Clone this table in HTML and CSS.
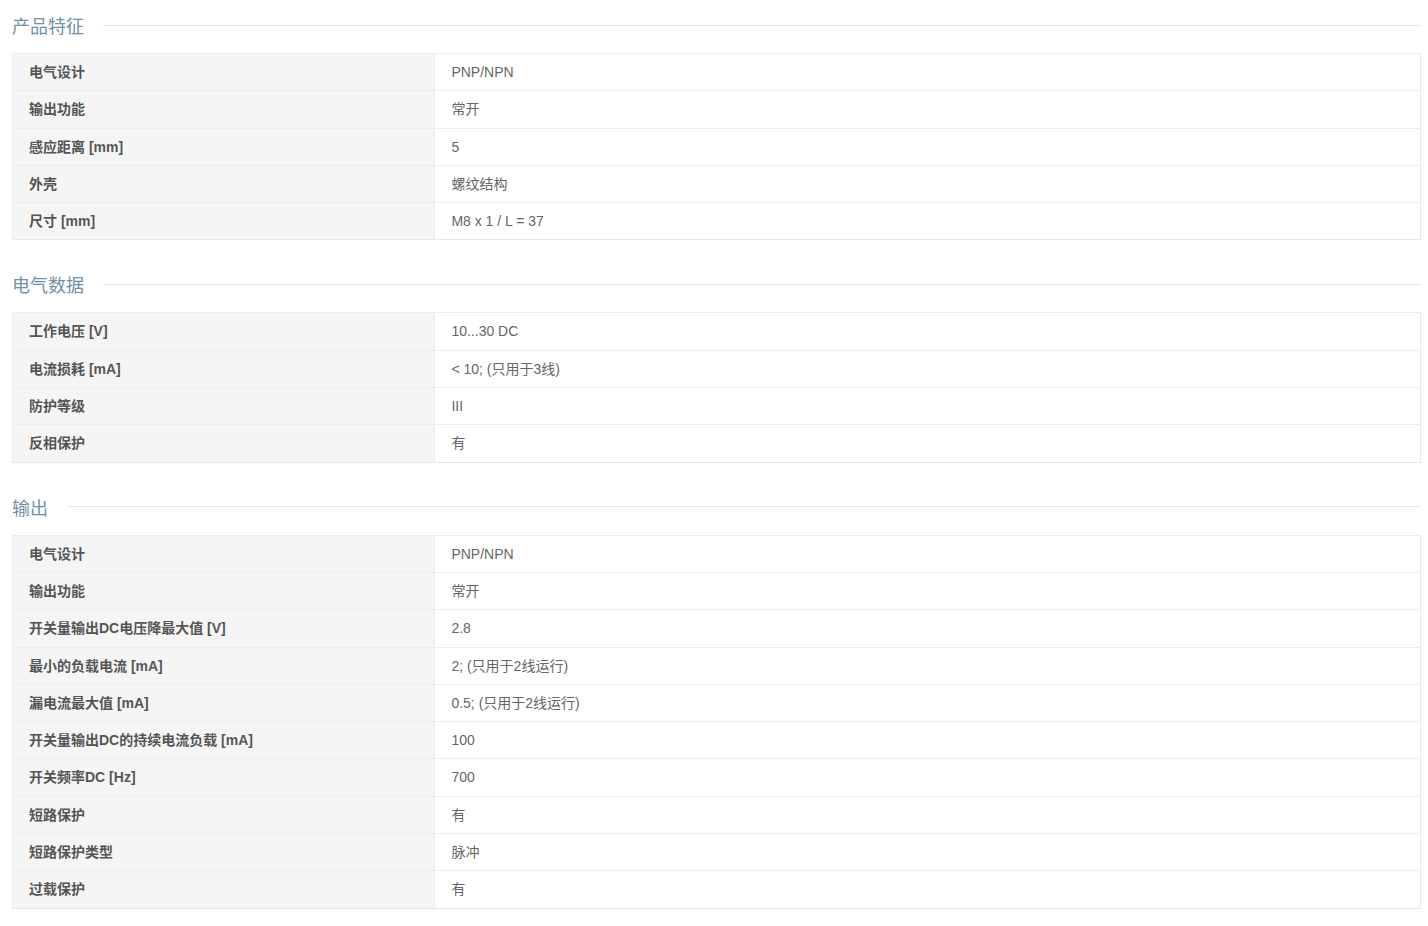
FILE: index.html
```html
<!DOCTYPE html>
<html>

<head>
	<meta charset="UTF-8">
	<title>产品参数</title>
	<link rel="stylesheet" href="styles.css">
</head>

<body>
	<div class="spec-page">
		<div class="spec-section">
			<h3 class="spec-title"><span>产品特征</span></h3>
			<table class="spec-table">
				<tr><td class="key">电气设计</td><td>PNP/NPN</td></tr>
				<tr><td class="key">输出功能</td><td>常开</td></tr>
				<tr><td class="key">感应距离 [mm]</td><td>5</td></tr>
				<tr><td class="key">外壳</td><td>螺纹结构</td></tr>
				<tr><td class="key">尺寸 [mm]</td><td>M8 x 1 / L = 37</td></tr>
			</table>
		</div>

		<div class="spec-section">
			<h3 class="spec-title"><span>电气数据</span></h3>
			<table class="spec-table">
				<tr><td class="key">工作电压 [V]</td><td>10...30 DC</td></tr>
				<tr><td class="key">电流损耗 [mA]</td><td>&lt; 10; (只用于3线)</td></tr>
				<tr><td class="key">防护等级</td><td>III</td></tr>
				<tr><td class="key">反相保护</td><td>有</td></tr>
			</table>
		</div>

		<div class="spec-section">
			<h3 class="spec-title"><span>输出</span></h3>
			<table class="spec-table">
				<tr><td class="key">电气设计</td><td>PNP/NPN</td></tr>
				<tr><td class="key">输出功能</td><td>常开</td></tr>
				<tr><td class="key">开关量输出DC电压降最大值 [V]</td><td>2.8</td></tr>
				<tr><td class="key">最小的负载电流 [mA]</td><td>2; (只用于2线运行)</td></tr>
				<tr><td class="key">漏电流最大值 [mA]</td><td>0.5; (只用于2线运行)</td></tr>
				<tr><td class="key">开关量输出DC的持续电流负载 [mA]</td><td>100</td></tr>
				<tr><td class="key">开关频率DC [Hz]</td><td>700</td></tr>
				<tr><td class="key">短路保护</td><td>有</td></tr>
				<tr><td class="key">短路保护类型</td><td>脉冲</td></tr>
				<tr><td class="key">过载保护</td><td>有</td></tr>
			</table>
		</div>
	</div>
</body>

</html>
```

FILE: styles.css
```css
html,
body {
	margin: 0;
	padding: 0;
	background: #fff;
	font-family: "Liberation Sans", Arial, "Noto Sans CJK SC", sans-serif;
	font-size: 14px;
	color: #666;
}

.spec-page {
	padding: 10px 7px 0 12px;
}

.spec-section {
	margin-bottom: 29px;
}

.spec-title {
	display: flex;
	align-items: center;
	margin: 0;
	height: 30px;
	font-size: 18px;
	font-weight: normal;
	color: #7290a8;
}

.spec-title::after {
	content: "";
	flex: 1;
	height: 1px;
	margin-left: 19px;
	background: #e6e6e6;
}

.spec-table {
	width: 100%;
	margin-top: 13px;
	border-collapse: collapse;
	border: 1px solid #e8e8e8;
}

.spec-table td {
	padding: 10px 16px;
	height: 16.3px;
	line-height: 16.3px;
	border-top: 1px solid #ececec;
	color: #666;
	vertical-align: middle;
}

.spec-table td.key {
	width: 30%;
	box-sizing: border-box;
	background: #f5f5f5;
	border-right: 1px solid #ececec;
	font-weight: bold;
	color: #555;
}
```
